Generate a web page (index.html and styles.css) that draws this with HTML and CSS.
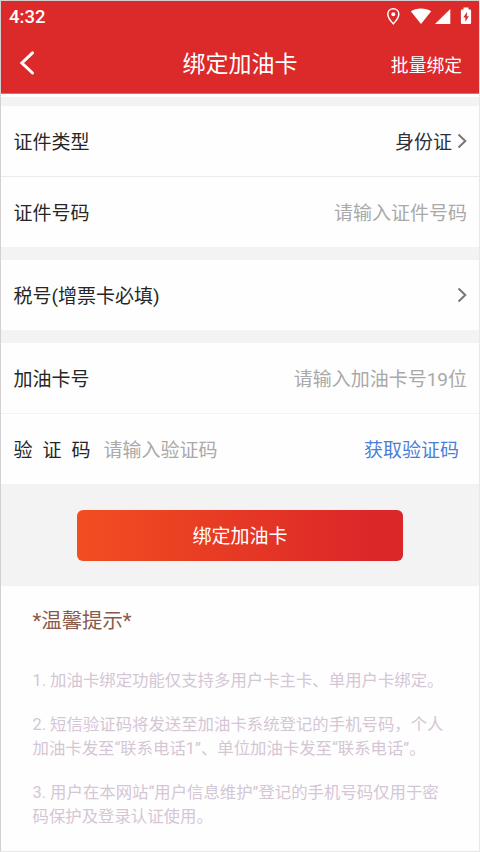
FILE: index.html
```html
<!DOCTYPE html>
<html lang="zh-CN">
<head>
<meta charset="utf-8">
<meta name="viewport" content="width=device-width, initial-scale=1">
<title>绑定加油卡</title>
<link rel="stylesheet" href="styles.css">
</head>
<body>
<div class="screen">
  <header class="header">
    <div class="status">
      <span class="time">4:32</span>
      <svg class="status-icons" width="86" height="20" viewBox="0 0 86 20" fill="#fff">
        <path d="M7.3 1.8c-3.2 0-5.5 2.400-5.500 5.400 0 3.800 5.500 9.600 5.500 9.600s5.500-5.800 5.500-9.600c0-3-2.300-5.400-5.500-5.400z" fill="none" stroke="#fff" stroke-width="1.5"/>
        <circle cx="7.3" cy="7.2" r="2"/>
        <path d="M24.8 4.2C30.500 0.500 39.500 0.500 45.200 4.200L35 17z"/>
        <path d="M64.300 2V17H49z"/>
        <path d="M77.500 0.500h5v2h1.500q1.100 0 1.100 1.100v12.300q0 1.100-1.100 1.100h-8q-1.100 0-1.100-1.100v-12.300q0-1.100 1.100-1.100h1.500z"/>
        <path d="M80.900 5L77.300 10.400h2.100v4.300l3.400-5.500h-1.900z" fill="#dc292a"/>
      </svg>
    </div>
    <nav class="nav">
      <svg class="back" width="18" height="26" viewBox="0 0 18 26" fill="none" stroke="#fff" stroke-width="3" stroke-linecap="round"><path d="M14.500 2.800L3.900 13L14.500 23"/></svg>
      <h1 class="title">绑定加油卡</h1>
      <span class="batch">批量绑定</span>
    </nav>
  </header>
  <main>
    <section class="group">
      <div class="row"><span>证件类型</span><span class="value"><span>身份证</span><svg class="chevron" width="10" height="16" viewBox="0 0 10 16"><path d="M1.500 1.500L8.300 8L1.500 14.500"/></svg></span></div>
      <div class="row second"><span>证件号码</span><span class="hint">请输入证件号码</span></div>
    </section>
    <section class="group">
      <div class="row"><span>税号(增票卡必填)</span><svg class="chevron" width="10" height="16" viewBox="0 0 10 16"><path d="M1.500 1.500L8.300 8L1.500 14.500"/></svg></div>
    </section>
    <section class="group">
      <div class="row"><span>加油卡号</span><span class="hint">请输入加油卡号19位</span></div>
      <div class="row second light"><span class="spread"><i>验</i><i>证</i><i>码</i></span><span class="hint code-hint">请输入验证码</span><span class="get-code">获取验证码</span></div>
    </section>
    <div class="action"><div class="submit">绑定加油卡</div></div>
    <section class="tips">
      <h2>*温馨提示*</h2>
      <p>1. 加油卡绑定功能仅支持多用户卡主卡、单用户卡绑定。</p>
      <p>2. 短信验证码将发送至加油卡系统登记的手机号码，个人<br>加油卡发至“联系电话1”、单位加油卡发至“联系电话”。</p>
      <p>3. 用户在本网站“用户信息维护”登记的手机号码仅用于密<br>码保护及登录认证使用。</p>
    </section>
  </main>
</div>
</body>
</html>
```
FILE: styles.css
```css
* { box-sizing: border-box; }
body {
  margin: 0;
  font-family: Roboto, "Noto Sans CJK SC", sans-serif;
  font-size: 19px;
  color: #262626;
}
.screen {
  width: 480px;
  height: 852px;
  overflow: hidden;
  border: 1px solid #d4cfd1;
  border-right-color: #e8e8e8;
  border-bottom-color: #e8e8e8;
  background: #fefefe;
}
.header {
  height: 93px;
  color: #fff;
  background: #dc292a;
  border-bottom: 1px solid #e66b6b;
}
.status {
  display: flex;
  justify-content: space-between;
  height: 32px;
  padding: 6px 7px 0 8px;
}
.time { font-size: 18.5px; font-weight: 500; line-height: 21px; }
.nav {
  display: grid;
  grid-template-columns: 110px 1fr 110px;
  align-items: center;
  height: 60px;
  padding: 0 17px 0 17px;
}
.title {
  margin: 0;
  padding-top: 3px;
  font-size: 23px;
  font-weight: 400;
  line-height: 34px;
  text-align: center;
}
.batch { padding-top: 1px; font-size: 17.8px; text-align: right; }
main { padding-top: 3px; }
.group {
  border-top: 13px solid #f3f3f3;
}
.group:first-child { border-top-width: 9px; }
.row {
  display: flex;
  justify-content: space-between;
  align-items: center;
  height: 70px;
  padding: 0 12px 0 12.5px;
  line-height: 28px;
}
.row span:not(.value) { padding-top: 4px; }
.second { height: 71px; border-top: 1px solid #ebebeb; }
.second span:not(.value) { padding-top: 3px; }
.light { border-top-color: #f3f3f3; }
.value { display: flex; align-items: center; gap: 5px; color: #2e3038; }
.chevron { fill: none; stroke: #777; stroke-width: 2; }
.hint { color: #a9a9a9; }
.spread { display: flex; justify-content: space-between; width: 77px; }
.spread i { font-style: normal; }
.code-hint { margin: 0 auto 0 13px; }
.get-code { margin-right: 8px; color: #4b7fd7; }
.action {
  height: 102px;
  padding: 26px 76px 25px;
  background: #f3f3f3;
}
.submit {
  height: 51px;
  padding-top: 1px;
  border-radius: 6px;
  color: #fff;
  line-height: 51px;
  text-align: center;
  background: linear-gradient(90deg, #f24e20, #dc2729 90%);
}
.tips {
  padding: 20px 24px 0 31.5px;
  color: #d5c6d5;
  font-size: 16.4px;
  line-height: 24px;
  white-space: nowrap;
}
.tips h2 {
  margin: 0 0 33px;
  color: #8b5949;
  font-size: 20.4px;
  font-weight: 400;
  line-height: 30px;
}
.tips p { margin: 0 0 20px; }
```
